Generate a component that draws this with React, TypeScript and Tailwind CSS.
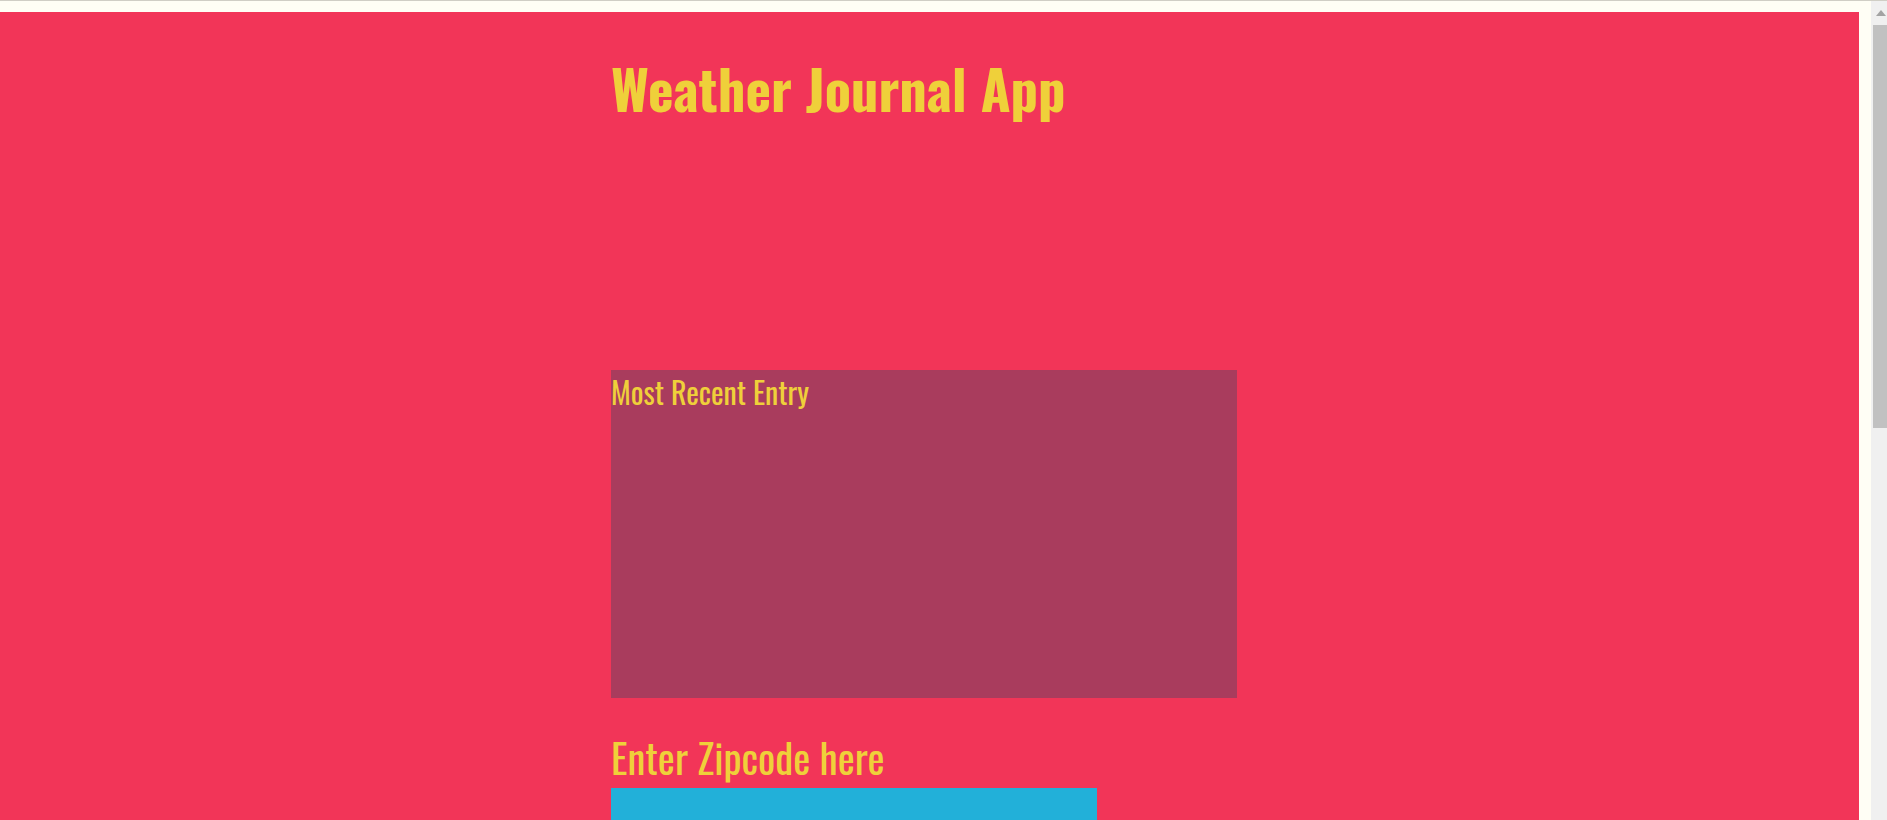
import React from "react";

const font = "font-['Oswald','Liberation_Sans_Narrow','DejaVu_Sans_Condensed',sans-serif]";

export default function App() {
  return (
    <div className="h-[820px] w-full overflow-hidden bg-[#fffef5] flex flex-col">
      <div className="h-px shrink-0 bg-[#d0cec5]" />
      <div className="flex flex-1 min-h-0">
        <div className="w-[1859px] flex flex-col">
          <div className="h-[11px] shrink-0" />
          <main className={`flex-1 min-h-0 overflow-hidden bg-[#f23558] pl-[611px] text-[#efd03a] ${font}`}>
            <h1 className="pt-[46px] text-[54.4px] font-bold leading-[60px]">Weather Journal App</h1>
            <div className="mt-[252px] w-[626px] h-[328px] bg-[#a93c5d] pt-[2px]">
              <h2 className="text-[30px] leading-[40px]">Most Recent Entry</h2>
            </div>
            <label className="block mt-[31px] text-[40.6px] leading-[56px]">Enter Zipcode here</label>
            <input className="block mt-[3px] w-[486px] h-[40px] bg-[#22b0d9] outline-none" />
          </main>
        </div>
        <div className="w-3 shrink-0" />
        <div className="w-4 shrink-0 bg-[#f0f0f0] flex flex-col items-end">
          <div className="w-full h-6 flex justify-center items-center">
            <svg width="10" height="6" viewBox="0 0 10 6" className="ml-1">
              <path d="M5 0L10 6H0Z" fill="#a3a3a3" />
            </svg>
          </div>
          <div className="w-[14px] h-[403px] bg-[#c1c1c1]" />
        </div>
      </div>
    </div>
  );
}
